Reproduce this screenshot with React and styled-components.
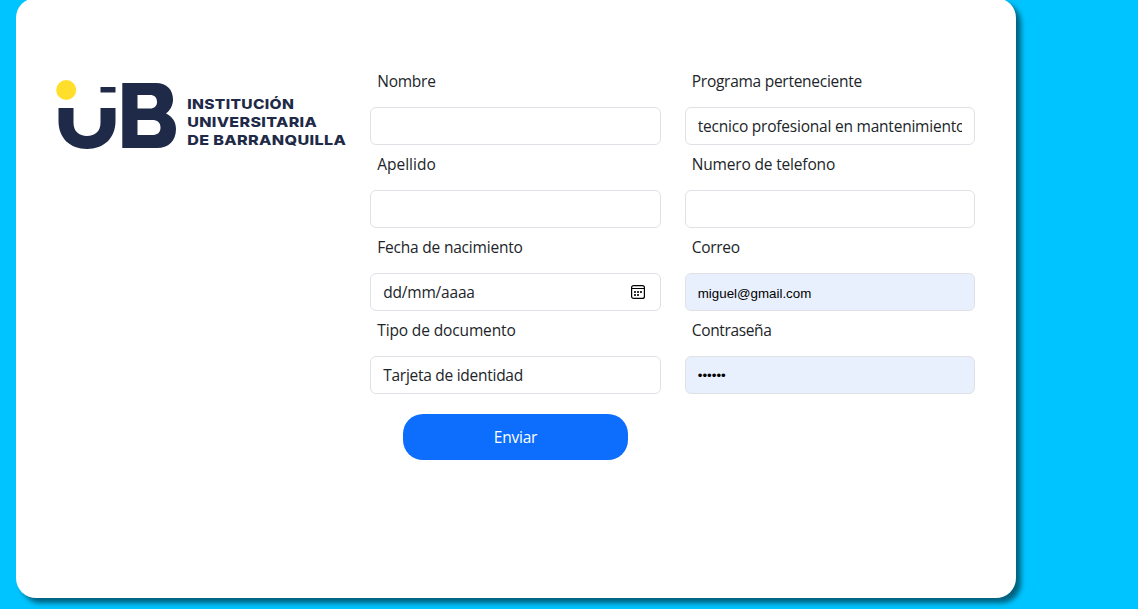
import React from "react";
import styled, { createGlobalStyle } from "styled-components";

const GlobalStyle = createGlobalStyle`
  *, *::before, *::after { box-sizing: border-box; }
  html, body { height: 100%; }
  body {
    margin: 0;
    overflow: hidden;
    background: #00c4ff;
    color: #212529;
    font-family: "Segoe UI", "Open Sans", "Noto Sans", sans-serif;
    font-size: 15.5px;
    line-height: 24px;
  }
`;

const Card = styled.main`
  width: 1000px;
  height: 600px;
  margin: -2px 0 0 16px;
  padding: 70px 28.7px 0 27.7px;
  border-radius: 20px;
  background: #fff;
  box-shadow: 5px 5px 5px rgba(0, 0, 0, 0.5);
`;

const Columns = styled.form`
  display: grid;
  grid-template-columns: repeat(3, minmax(0, 1fr));
  margin: 0;
`;

const Column = styled.div`
  padding: 0 12px;
`;

const Logo = styled.svg`
  display: block;
  width: 291px;
  height: 72px;
  margin: 10px 0 0 0.3px;
`;

const LogoText = styled.text`
  font-family: Inter, sans-serif;
  font-size: 13.8px;
  font-weight: 800;
  letter-spacing: 0.3px;
  fill: #1e2a47;
`;

const Field = styled.div`
  height: 83px;
`;

const Label = styled.label`
  display: block;
  padding: 1px 0 0 7px;
  margin-bottom: 14px;
  letter-spacing: ${(p) => p.$spacing || 0}px;
`;

const Control = styled.div`
  display: flex;
  align-items: center;
  height: 38px;
  padding: 0 12px;
  border: 1px solid #dee2e6;
  border-radius: 6px;
  background: ${(p) => (p.$filled ? "#e8f0fe" : "#fff")};
`;

const Input = styled.input`
  flex: 1;
  min-width: 0;
  height: 36px;
  padding: ${(p) => (p.$filled && p.type === "text" ? "2px 0 0" : "0")};
  border: 0;
  outline: 0;
  background: transparent;
  color: ${(p) => (p.$filled ? "#000" : "#212529")};
  font-family: ${(p) => (p.$filled ? '"Liberation Sans", Arial, sans-serif' : "inherit")};
  font-size: ${(p) => (p.$filled ? "13.333px" : "15.5px")};
  letter-spacing: ${(p) => p.$spacing || 0}px;
`;

const CalendarIcon = styled.svg`
  width: 14px;
  height: 14px;
  margin-right: 3px;
`;

const Submit = styled.button`
  display: block;
  width: 225px;
  height: 46px;
  margin: 14px auto 0;
  padding: 0;
  border: 0;
  border-radius: 20px;
  background: #0d6efd;
  color: #fff;
  font: inherit;
  letter-spacing: -0.2px;
`;

function TextField({ id, label, labelSpacing, spacing, filled, type = "text", value = "", icon }) {
  return (
    <Field>
      <Label htmlFor={id} $spacing={labelSpacing}>{label}</Label>
      <Control $filled={filled}>
        <Input id={id} type={type} defaultValue={value} $filled={filled} $spacing={spacing} spellCheck={false} />
        {icon}
      </Control>
    </Field>
  );
}

function Calendar() {
  return (
    <CalendarIcon viewBox="0 0 14 14">
      <rect x="0.6" y="0.6" width="12.8" height="12.8" rx="2" fill="none" stroke="#000" strokeWidth="1.2" />
      <path d="M1 3.5h12" stroke="#000" strokeWidth="1" />
      <path d="M3 6h2v2H3zM6 6h2v2H6zM9 6h2v2H9zM3 9h2v2H3zM6 9h2v2H6z" fill="#333" />
    </CalendarIcon>
  );
}

function UniversityLogo() {
  return (
    <Logo viewBox="0 0 291 72">
      <circle cx="10.2" cy="12" r="10" fill="#ffdf2b" />
      <g fill="#1e2a47">
        <path d="M2.500 30H17.500V45C17.500 53 23 58 31 58S44.500 53 44.500 45V30H59.500V43C59.500 60 48 71 31 71S2.500 60 2.500 43Z" />
        <path d="M44.500 9H59.500V14.500H44.500Z" />
        <path fillRule="evenodd" d="M66.300 5H100C111 5 117 12 117 21.500C117 27.500 114 32.500 110 35.500C116.500 38.500 120 44 120 51C120 63 112.500 70 101 70H66.300ZM81.500 17V30.500H94C98.500 30.500 101 28 101 24C101 19.500 98.500 17 94 17ZM81.500 42V57H96C101.500 57 104.500 54.500 104.500 49.500S101.500 42 96 42Z" />
      </g>
      <LogoText x="131.2" y="31" textLength="107" lengthAdjust="spacingAndGlyphs">INSTITUCIÓN</LogoText>
      <LogoText x="131.2" y="49" textLength="130" lengthAdjust="spacingAndGlyphs">UNIVERSITARIA</LogoText>
      <LogoText x="131.2" y="66.5" textLength="159" lengthAdjust="spacingAndGlyphs">DE BARRANQUILLA</LogoText>
    </Logo>
  );
}

export default function App() {
  return (
    <>
      <GlobalStyle />
      <Card>
        <Columns onSubmit={(e) => e.preventDefault()}>
          <Column>
            <UniversityLogo />
          </Column>
          <Column>
            <TextField id="nombre" label="Nombre" labelSpacing={-0.25} />
            <TextField id="apellido" label="Apellido" />
            <TextField id="fecha" label="Fecha de nacimiento" labelSpacing={-0.2} value="dd/mm/aaaa" spacing={-0.2} icon={<Calendar />} />
            <TextField id="tipo" label="Tipo de documento" labelSpacing={-0.13} value="Tarjeta de identidad" spacing={-0.27} />
            <Submit type="submit">Enviar</Submit>
          </Column>
          <Column>
            <TextField id="programa" label="Programa perteneciente" labelSpacing={-0.27} value="tecnico profesional en mantenimiento" spacing={-0.22} />
            <TextField id="telefono" label="Numero de telefono" labelSpacing={-0.17} />
            <TextField id="correo" label="Correo" labelSpacing={-0.3} value="miguel@gmail.com" filled />
            <TextField id="clave" label="Contraseña" labelSpacing={-0.35} type="password" value="123456" filled />
          </Column>
        </Columns>
      </Card>
    </>
  );
}
